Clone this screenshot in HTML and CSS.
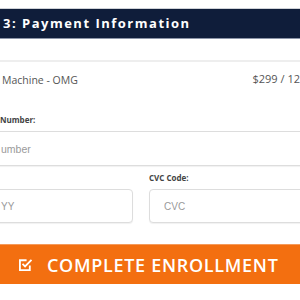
FILE: index.html
```html
<!DOCTYPE html>
<html lang="en">
<head>
    <meta charset="UTF-8">
    <meta name="viewport" content="width=device-width, initial-scale=1.0">
    <title>Payment Information</title>
    <link rel="stylesheet" href="styles.css">
</head>
<body>
<div class="step-header">3: Payment Information</div>

<div class="order-summary">
    <div class="plan-row">
        <span class="plan-name">Machine - OMG</span>
        <span class="plan-price">$299 / 12</span>
    </div>
</div>

<div class="payment-form">
    <label class="field-label">Number:</label>
    <input class="field-input wide-input" type="text" placeholder="umber">

    <div class="field-row">
        <div class="field-col">
            <label class="field-label">&nbsp;</label>
            <input class="field-input left-input" type="text" placeholder="YY">
        </div>
        <div class="field-col">
            <label class="field-label">CVC Code:</label>
            <input class="field-input" type="text" placeholder="CVC">
        </div>
    </div>
</div>

<button class="enroll-button">
    <svg class="check-icon" viewBox="0 0 14 14" width="15" height="15">
        <path d="M11 8v4.2H1.8V3H8" fill="none" stroke="#fff" stroke-width="1.7"/>
        <path d="M4.2 6.4l2.4 2.4 6-6.2" fill="none" stroke="#fff" stroke-width="1.7"/>
    </svg>
    <span>COMPLETE ENROLLMENT</span>
</button>
</body>
</html>
```

FILE: styles.css
```css
body {
    font-family: "Open Sans", "Liberation Sans", sans-serif;
    margin: 0;
    padding: 0;
    background-color: #fff;
    color: #555;
    overflow: hidden;
}
.step-header {
    margin-top: 8px;
    height: 29px;
    line-height: 29px;
    padding-left: 3px;
    background-color: #0f1d3a;
    border-top: 1px solid #cfd2d8;
    border-bottom: 1px solid #8c95a8;
    color: #fff;
    font-size: 13px;
    font-weight: bold;
    letter-spacing: 1.5px;
}
.order-summary {
    margin-top: 21px;
    border-top: 2px solid #eee;
}
.plan-row {
    display: flex;
    justify-content: space-between;
    align-items: center;
    padding: 6px 0 0 2px;
    height: 24px;
}
.plan-name {
    font-size: 10.5px;
    color: #555;
}
.plan-price {
    font-size: 11px;
    color: #555;
    margin-top: -3px;
}
.payment-form {
    margin-top: 22px;
}
.field-label {
    display: block;
    font-size: 8px;
    font-weight: bold;
    color: #444;
    height: 12px;
    line-height: 12px;
    margin-bottom: 5px;
}
.field-input {
    display: block;
    box-sizing: border-box;
    width: 100%;
    height: 34px;
    padding: 0 0 0 14px;
    border: 1px solid #ddd;
    border-radius: 4px;
    box-shadow: 0 1px 1px rgba(0, 0, 0, 0.06);
    font-family: "Liberation Sans", Arial, sans-serif;
    font-size: 10px;
    color: #333;
    background-color: #fff;
}
.field-input::placeholder {
    color: #9a9a9a;
}
.wide-input {
    width: calc(100% + 8px);
    height: 35px;
    margin-left: -4px;
    padding-left: 4px;
    font-size: 10.5px;
}
.left-input {
    padding-left: 4px;
}
.field-row {
    display: grid;
    grid-template-columns: 137px 1fr;
    gap: 16px;
    margin: 6px -4px 0 -4px;
}
.enroll-button {
    display: flex;
    align-items: center;
    width: 100%;
    height: 40px;
    margin-top: 21px;
    padding: 0 0 0 18px;
    background-color: #f36f10;
    border: none;
    border-top: 1px solid #f59a5a;
    color: #fff;
    font-family: "Open Sans", "Liberation Sans", sans-serif;
    font-size: 18px;
    font-weight: 600;
    letter-spacing: 0.7px;
    cursor: pointer;
}
.check-icon {
    margin-right: 14px;
}
```
